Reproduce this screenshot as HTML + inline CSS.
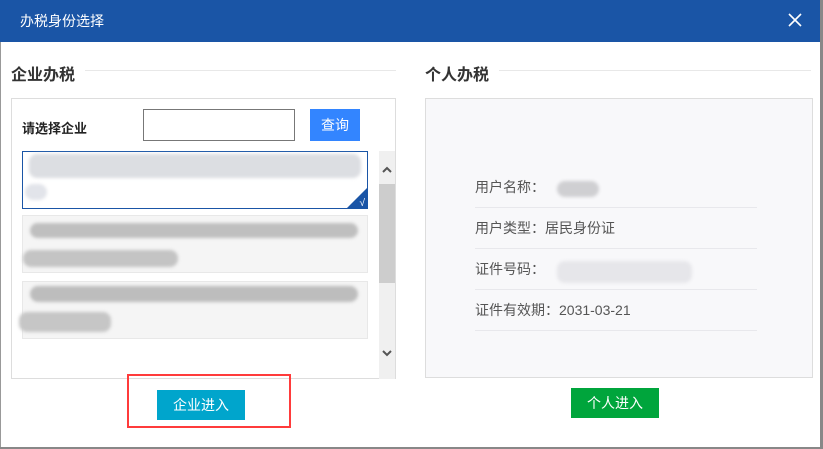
<!DOCTYPE html>
<html><head><meta charset="utf-8"><style>
*{margin:0;padding:0;box-sizing:border-box}
body{width:823px;height:449px;background:#888;position:relative;overflow:hidden;font-family:"Liberation Sans","Noto Sans CJK SC",sans-serif}
.dlg{position:absolute;left:0;top:0;width:820px;height:447px;background:#fff}
.hd{position:absolute;left:0;top:0;width:820px;height:42px;background:#1a55a6;color:#fff;font-size:14px;line-height:42px;padding-left:20px}
.x{position:absolute;right:18px;top:13px;width:14px;height:14px}
.sec{position:absolute;font-size:16px;font-weight:bold;color:#333}
.ln{position:absolute;height:1px;background:#e8e8e8}
.box{position:absolute;border:1px solid #ddd}
.b{position:absolute;border-radius:8px;filter:blur(1.5px)}
.it{position:absolute;left:49px;font-size:14px;color:#555;width:282px;height:41px;border-bottom:1px solid #e8e8ec;line-height:41px}
.btn{position:absolute;color:#fff;font-size:14px;text-align:center;line-height:30px}
</style></head><body>
<div class="dlg">
<div style="position:absolute;left:0;top:42px;width:1px;height:405px;background:#999"></div>
<div class="hd">办税身份选择
<svg class="x" viewBox="0 0 14 14"><path d="M1 1L13 13M13 1L1 13" stroke="#fff" stroke-width="1.6"/></svg></div>
<div class="sec" style="left:11px;top:61px">企业办税</div>
<div class="ln" style="left:85px;top:70px;width:311px"></div>
<div class="sec" style="left:425px;top:61px">个人办税</div>
<div class="ln" style="left:499px;top:70px;width:312px"></div>

<div class="box" style="left:11px;top:98px;width:385px;height:281px;background:#fff">
 <div style="position:absolute;left:10px;top:19px;font-size:13px;font-weight:bold;color:#222">请选择企业</div>
 <div style="position:absolute;left:131px;top:10px;width:152px;height:32px;border:1px solid #777"></div>
 <div class="btn" style="left:298px;top:10px;width:50px;height:32px;line-height:32px;background:#3385ff">查询</div>
 <div style="position:absolute;left:10px;top:52px;width:346px;height:58px;border:1px solid #1a55a6;background:#fff">
  <div class="b" style="left:6px;top:2px;width:332px;height:24px;background:#dcdee2"></div>
  <div class="b" style="left:2px;top:32px;width:22px;height:16px;background:#e2e4ea"></div>
  <div style="position:absolute;right:0;bottom:0;width:0;height:0;border-left:20px solid transparent;border-bottom:20px solid #1a55a6"></div>
  <div style="position:absolute;right:2px;bottom:-1px;color:#fff;font-size:10px">√</div>
 </div>
 <div style="position:absolute;left:10px;top:116px;width:346px;height:58px;border:1px solid #e8e8e8;background:#f5f5f5">
  <div class="b" style="left:7px;top:7px;width:328px;height:15px;background:#bfbfbf"></div>
  <div class="b" style="left:0;top:34px;width:155px;height:17px;background:#c4c4c4"></div>
 </div>
 <div style="position:absolute;left:10px;top:182px;width:346px;height:58px;border:1px solid #e8e8e8;background:#f5f5f5">
  <div class="b" style="left:7px;top:4px;width:328px;height:16px;background:#bdbdbd"></div>
  <div class="b" style="left:-4px;top:30px;width:92px;height:20px;background:#c6c6c6"></div>
 </div>
 <div style="position:absolute;left:367px;top:52px;width:16px;height:228px;background:#f0f0f0">
  <div style="position:absolute;left:0;top:33px;width:16px;height:99px;background:#cdcdcd"></div>
  <svg style="position:absolute;left:3px;top:15px" width="10" height="7" viewBox="0 0 10 7"><path d="M1 6L5 2L9 6" stroke="#555" stroke-width="2" fill="none"/></svg>
  <svg style="position:absolute;left:3px;top:199px" width="10" height="7" viewBox="0 0 10 7"><path d="M1 1L5 5L9 1" stroke="#555" stroke-width="2" fill="none"/></svg>
 </div>
</div>
<div style="position:absolute;left:127px;top:374px;width:164px;height:54px;border:2px solid #ff3b3b"></div>
<div class="btn" style="left:157px;top:390px;width:88px;height:30px;background:#00a5cc">企业进入</div>

<div class="box" style="left:425px;top:98px;width:388px;height:280px;background:#f8f8fa">
 <div class="it" style="top:68px">用户名称：<div class="b" style="left:82px;top:14px;width:42px;height:16px;background:#cfcfd2"></div></div>
 <div class="it" style="top:109px">用户类型：居民身份证</div>
 <div class="it" style="top:150px">证件号码：<div class="b" style="left:82px;top:12px;width:135px;height:22px;background:#e6e6ea"></div></div>
 <div class="it" style="top:191px">证件有效期：2031-03-21</div>
</div>
<div class="btn" style="left:571px;top:388px;width:88px;height:30px;background:#00a53c">个人进入</div>
</div>
</body></html>
